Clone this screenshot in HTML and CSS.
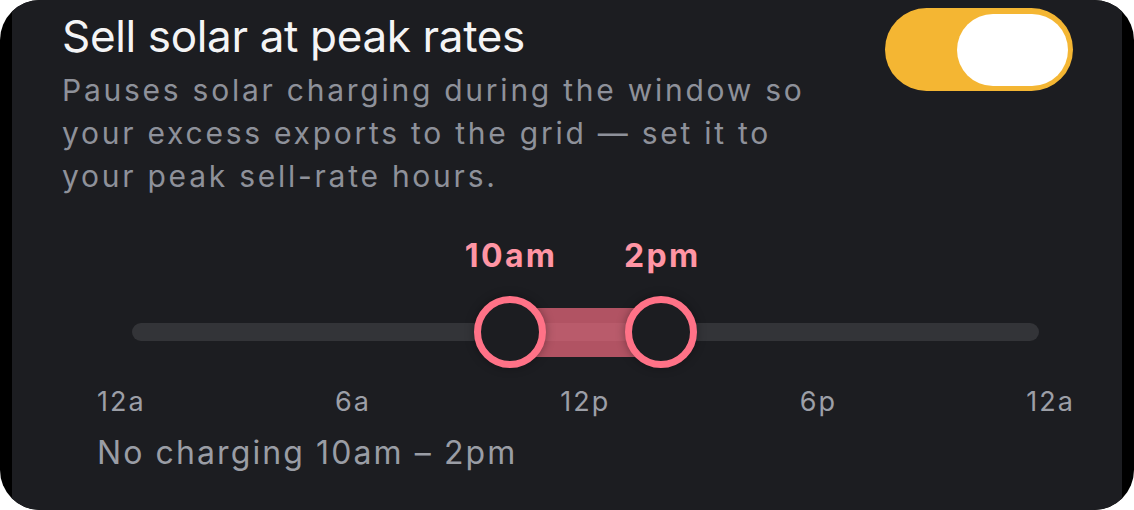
FILE: index.html
```html
<!DOCTYPE html>
<html lang="en">
<head>
<meta charset="utf-8">
<title>Sell solar at peak rates</title>
<link rel="stylesheet" href="styles.css">
</head>
<body>
<div class="frame">
  <section class="card">
    <div class="card-head">
      <div class="card-text">
        <h2 class="card-title">Sell solar at peak rates</h2>
        <p class="card-desc">Pauses solar charging during the window so your excess exports to the grid — set it to your peak sell-rate hours.</p>
      </div>
      <button class="switch is-on" type="button" aria-pressed="true" aria-label="Sell solar at peak rates">
        <span class="switch-knob"></span>
      </button>
    </div>

    <div class="window">
      <div class="range">
        <div class="range-values">
          <span class="range-value" style="left: 41.6667%">10am</span>
          <span class="range-value" style="left: 58.3333%">2pm</span>
        </div>
        <div class="range-rail">
          <div class="range-track"></div>
          <div class="range-fill" style="left: 41.6667%; width: 16.6667%"></div>
          <span class="range-thumb" style="left: 41.6667%"></span>
          <span class="range-thumb" style="left: 58.3333%"></span>
        </div>
      </div>
      <div class="range-ticks">
        <span>12a</span>
        <span>6a</span>
        <span>12p</span>
        <span>6p</span>
        <span>12a</span>
      </div>
      <p class="window-summary">No charging 10am – 2pm</p>
    </div>
  </section>
</div>
</body>
</html>
```

FILE: styles.css
```css
html, body {
  margin: 0;
  padding: 0;
  background: #ffffff;
}

body {
  font-family: Inter, "Noto Sans", "Liberation Sans", sans-serif;
}

.frame {
  width: 1134px;
  height: 510px;
  box-sizing: border-box;
  padding: 0 12px;
  background: #000000;
  border-radius: 40px;
  overflow: hidden;
}

.card {
  height: 100%;
  box-sizing: border-box;
  background: #1c1d21;
  padding: 0 49px 0 50px;
}

/* header: title + description on the left, switch on the right */
.card-head {
  display: flex;
  justify-content: space-between;
  align-items: flex-start;
}

.card-text {
  padding-top: 10px;
}

.card-title {
  margin: 0;
  font-size: 44px;
  line-height: 52px;
  font-weight: 400;
  letter-spacing: -0.35px;
  color: #f4f4f5;
}

.card-desc {
  margin: 7px 0 0;
  max-width: 770px;
  font-size: 30px;
  line-height: 43px;
  letter-spacing: 2.75px;
  color: #8e919a;
}

.switch {
  margin-top: 8px;
  width: 188px;
  height: 83px;
  padding: 0 5px;
  border: 0;
  border-radius: 42px;
  background: #f4b633;
  display: flex;
  align-items: center;
  justify-content: flex-end;
  flex-shrink: 0;
}

.switch-knob {
  width: 111px;
  height: 72px;
  border-radius: 36px;
  background: #ffffff;
}

/* time window slider */
.window {
  margin: 38px 0 0 35px;
}

.range {
  margin: 0 34px 0 35px;
}

.range-values {
  position: relative;
  height: 40px;
}

.range-value {
  position: absolute;
  top: 0;
  transform: translateX(-50%);
  font-size: 32px;
  line-height: 40px;
  font-weight: 700;
  letter-spacing: 2.4px;
  text-indent: 2.4px;
  color: #ff95a4;
  white-space: nowrap;
}

.range-rail {
  position: relative;
  height: 72px;
  margin-top: 20px;
}

.range-track {
  position: absolute;
  left: 0;
  right: 0;
  top: 27px;
  height: 18px;
  border-radius: 9px;
  background: #333438;
}

.range-fill {
  position: absolute;
  top: 12px;
  height: 49px;
  background: rgba(255, 112, 133, 0.66);
}

.range-thumb {
  position: absolute;
  top: 0;
  width: 72px;
  height: 72px;
  box-sizing: border-box;
  margin-left: -36px;
  border: 7px solid #ff7287;
  border-radius: 50%;
  background: #1c1d21;
  box-shadow: 0 0 10px rgba(0, 0, 0, 0.35);
}

.range-ticks {
  display: flex;
  justify-content: space-between;
  margin-top: 18px;
  font-size: 27px;
  line-height: 32px;
  letter-spacing: 2px;
  color: #9c9fa7;
}

.range-ticks span:last-child {
  margin-right: -2px;
}

.window-summary {
  margin: 15px 0 0;
  font-size: 32px;
  line-height: 40px;
  letter-spacing: 2.1px;
  color: #9a9da5;
}
```
